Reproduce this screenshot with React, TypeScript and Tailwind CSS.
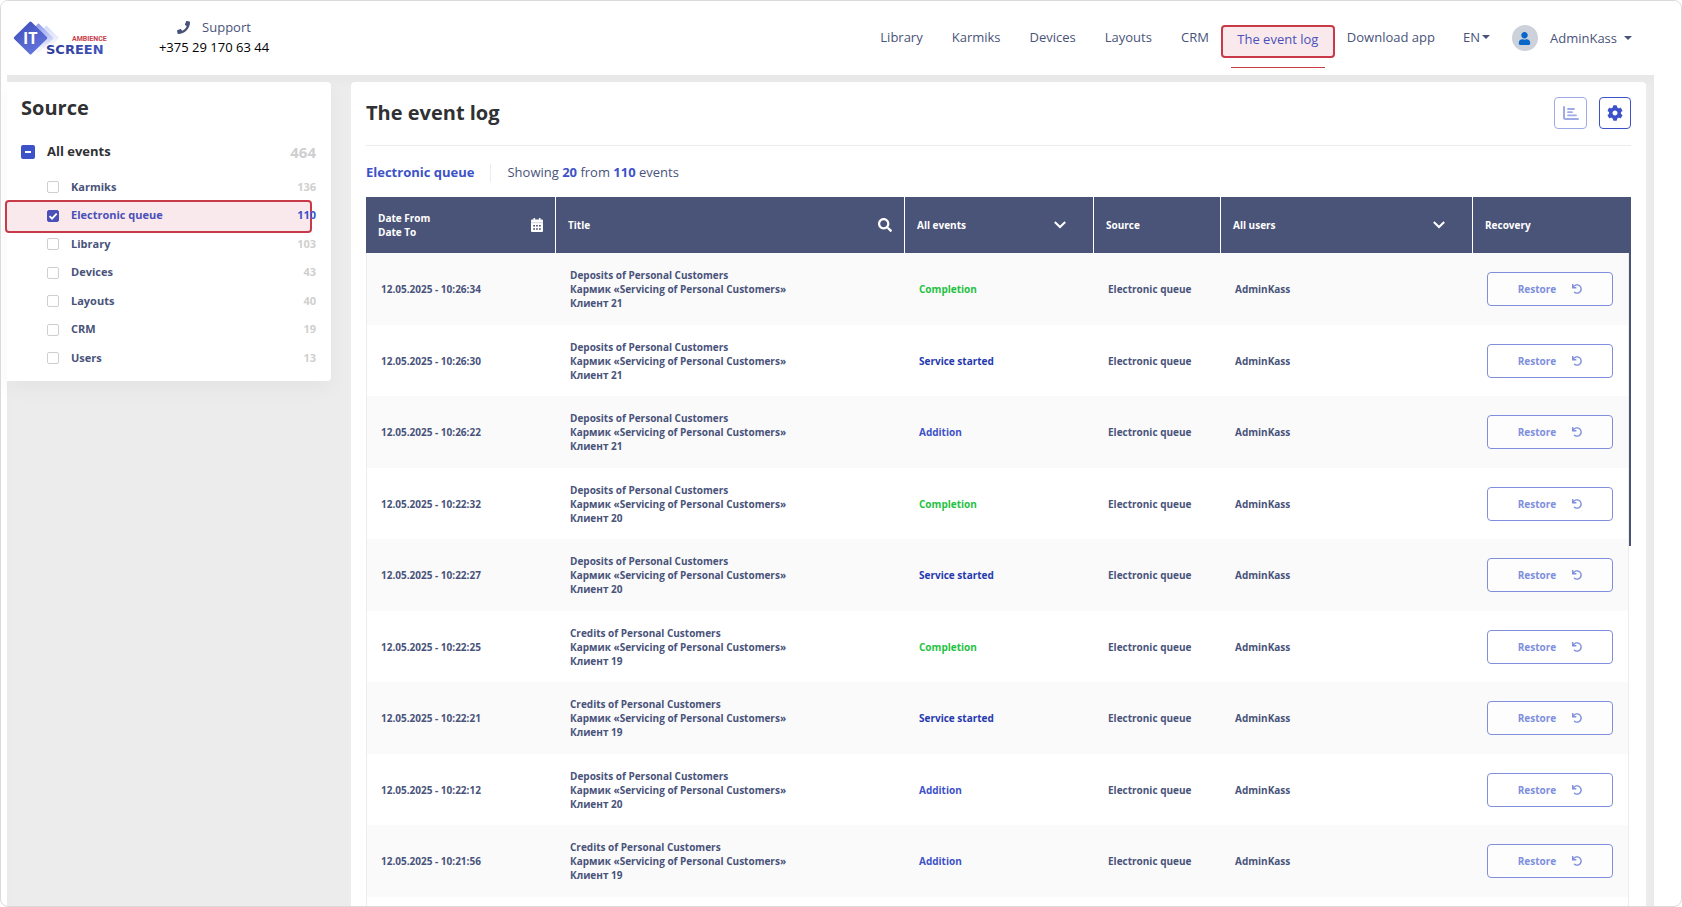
import { FaPhone, FaSearch, FaUser, FaCog, FaUndo } from "react-icons/fa";

type SourceItem = { name: string; count: number; checked?: boolean };
type LogRow = { date: string; kind: string; client: number; event: "Completion" | "Service started" | "Addition" };

const navBefore = ["Library", "Karmiks", "Devices", "Layouts", "CRM"];

const sources: SourceItem[] = [
  { name: "Karmiks", count: 136 },
  { name: "Electronic queue", count: 110, checked: true },
  { name: "Library", count: 103 },
  { name: "Devices", count: 43 },
  { name: "Layouts", count: 40 },
  { name: "CRM", count: 19 },
  { name: "Users", count: 13 },
];

const rows: LogRow[] = [
  { date: "12.05.2025 - 10:26:34", kind: "Deposits", client: 21, event: "Completion" },
  { date: "12.05.2025 - 10:26:30", kind: "Deposits", client: 21, event: "Service started" },
  { date: "12.05.2025 - 10:26:22", kind: "Deposits", client: 21, event: "Addition" },
  { date: "12.05.2025 - 10:22:32", kind: "Deposits", client: 20, event: "Completion" },
  { date: "12.05.2025 - 10:22:27", kind: "Deposits", client: 20, event: "Service started" },
  { date: "12.05.2025 - 10:22:25", kind: "Credits", client: 19, event: "Completion" },
  { date: "12.05.2025 - 10:22:21", kind: "Credits", client: 19, event: "Service started" },
  { date: "12.05.2025 - 10:22:12", kind: "Deposits", client: 20, event: "Addition" },
  { date: "12.05.2025 - 10:21:56", kind: "Credits", client: 19, event: "Addition" },
];

const eventColor = {
  Completion: "text-[#1fc243]",
  "Service started": "text-[#2439ae]",
  Addition: "text-[#3d52c8]",
};

function Logo() {
  return (
    <svg width="100" height="42" viewBox="0 0 100 42" role="img" aria-label="IT Screen Ambience">
      <defs>
        <linearGradient id="d1" x1="0" y1="0" x2="0.6" y2="1">
          <stop offset="0" stopColor="#3a4bb8" />
          <stop offset="1" stopColor="#6476dc" />
        </linearGradient>
        <linearGradient id="d2" x1="0" y1="0" x2="0" y2="1">
          <stop offset="0" stopColor="#8b99ea" />
          <stop offset="0.85" stopColor="#f4f5fe" />
        </linearGradient>
        <linearGradient id="d3" x1="0" y1="0" x2="0" y2="1">
          <stop offset="0" stopColor="#d3d9f9" />
          <stop offset="0.85" stopColor="#fbfbff" />
        </linearGradient>
        <linearGradient id="d4" x1="0" y1="0" x2="1" y2="0">
          <stop offset="0" stopColor="#2c3b98" />
          <stop offset="1" stopColor="#4254bd" />
        </linearGradient>
      </defs>
      <path d="M33.500 6.500l12.500 12.500-12.500 12.500L21 19z" fill="url(#d3)" />
      <path d="M25.500 4.200l15 15-15 15-15-15z" fill="url(#d2)" />
      <path d="M16.500 2.900q1-1 2 0l15.400 15.100q1 1 0 2L18.500 35.100q-1 1-2 0L1.200 20q-1-1 0-2z" fill="url(#d1)" />
      <text x="10" y="25" fill="#fff" fontFamily="Open Sans, sans-serif" fontWeight="700" fontSize="16">IT</text>
      <text x="59" y="22" fill="#c9404c" fontFamily="Roboto, sans-serif" fontWeight="700" fontSize="7">AMBIENCE</text>
      <text x="33" y="35" fill="url(#d4)" fontFamily="DejaVu Sans, sans-serif" fontWeight="700" fontSize="13">SCREEN</text>
    </svg>
  );
}

function Caret() {
  return (
    <svg width="8" height="4" viewBox="0 0 8 4" fill="currentColor" aria-hidden="true">
      <path d="M0 0h8L4 4z" />
    </svg>
  );
}

function Chevron() {
  return (
    <svg width="12" height="8" viewBox="0 0 12 8" fill="none" stroke="white" strokeWidth="2" aria-hidden="true">
      <path d="M0.800 1l5.200 5 5.200-5" />
    </svg>
  );
}

function CalendarIcon() {
  return (
    <svg width="12" height="14" viewBox="0 0 12 14" aria-hidden="true">
      <path d="M2.500 0h1.600v2H2.500zM7.900 0h1.600v2H7.900z" fill="#fff" />
      <rect x="0" y="1.600" width="12" height="12.400" rx="1" fill="#fff" />
      <path d="M0 4h12v1.200H0z" fill="#d9dbe6" />
      <path
        d="M2.200 7h1.800v1.600H2.200zM5.100 7h1.800v1.600H5.100zM8 7h1.800v1.600H8zM2.200 10.200h1.800v1.600H2.200zM5.100 10.200h1.800v1.600H5.100zM8 10.200h1.800v1.600H8z"
        fill="#4a5378"
      />
    </svg>
  );
}

function ChartIcon() {
  return (
    <svg width="16" height="14" viewBox="0 0 16 14" fill="none" stroke="currentColor" strokeWidth="2" strokeLinecap="round" aria-hidden="true">
      <path d="M1 1v10.500q0 1.500 1.500 1.500H15" />
      <path d="M5 3h6M5 6.200h4M5 9.400h8" strokeWidth="1.800" />
    </svg>
  );
}

function Header() {
  return (
    <header className="relative z-10 flex h-[74px] shrink-0 items-start justify-between bg-white pl-3 pr-[49px]">
      <div className="flex">
        <a href="#home" className="mt-[18px]">
          <Logo />
        </a>
        <div className="ml-8 mt-4 w-[138px] text-center text-[13px] leading-5">
          <a href="#support" className="flex items-center justify-center gap-3 text-[#49537a]">
            <FaPhone size={13} />
            Support
          </a>
          <p className="text-black">+375 29 170 63 44</p>
        </div>
      </div>
      <nav className="flex items-start text-[13px] leading-5 text-[#49537a]">
        <div className="mt-[26px] flex gap-[29px]">
          {navBefore.map((item) => (
            <a key={item} href="#nav">{item}</a>
          ))}
        </div>
        <div className="ml-3 mt-6 flex h-[43px] flex-col items-center justify-between">
          <a
            href="#log"
            className="flex h-[33px] w-[114px] items-center justify-center rounded border-2 border-[#c93a48] bg-[#f9e9ed] pb-[6px] text-[#4a50b8]"
          >
            The event log
          </a>
          <span className="h-px w-[94px] bg-[#c93a48]" />
        </div>
        <a href="#download" className="ml-3 mt-[26px]">Download app</a>
        <button className="ml-7 mt-[26px] flex items-center gap-[2px]">
          EN
          <Caret />
        </button>
        <button className="ml-[22px] mt-6 flex items-center">
          <span className="mr-3 flex size-[26px] items-center justify-center rounded-full bg-[#cdd1da] text-[#0a66c9]">
            <FaUser size={13} />
          </span>
          <span className="mr-[7px]">AdminKass</span>
          <Caret />
        </button>
      </nav>
    </header>
  );
}

function Sidebar() {
  return (
    <aside className="relative w-[324px] shrink-0 self-start rounded-r bg-white pb-[9px] pl-[14px] pr-[15px] pt-3 shadow-[0_8px_20px_rgba(0,0,0,0.04)]">
      <h2 className="text-xl font-bold leading-7 text-[#2f3133]">Source</h2>
      <div className="mt-4 flex h-7 items-center justify-between">
        <label className="flex items-center gap-3 text-[13px] font-bold text-[#2f3133]">
          <span className="relative flex size-[14px] items-center justify-center rounded-[2px] bg-[#3d52c8]">
            <input type="checkbox" className="absolute inset-0 m-0 size-full cursor-pointer opacity-0" />
            <span className="h-[2px] w-[6px] bg-white" />
          </span>
          All events
        </label>
        <span className="text-[15px] font-bold text-[#cfcfcf]">464</span>
      </div>
      <ul className="mt-[7px]">
        {sources.map((s) => (
          <li key={s.name} className="relative flex h-[29px] items-center justify-between text-[11px] font-bold odd:h-[28px]">
            {s.checked && (
              <span className="absolute -left-4 right-1 -top-[1px] h-[33px] rounded border-2 border-[#c93a48] bg-[#f9e9ed]" />
            )}
            <label className={`relative ml-[26px] flex items-center gap-3 ${s.checked ? "text-[#4a50b8]" : "text-[#49537a]"}`}>
              <span className="relative flex size-3">
                <input
                  type="checkbox"
                  defaultChecked={s.checked}
                  className="size-3 appearance-none rounded-[2px] border border-[#cfcfcf] bg-white checked:border-[#4a50b8] checked:bg-[#4a50b8]"
                />
                {s.checked && (
                  <svg className="pointer-events-none absolute inset-0" width="12" height="12" viewBox="0 0 12 12" fill="none" stroke="white" strokeWidth="1.800">
                    <path d="M2.500 6.200l2.500 2.400 4.700-5" />
                  </svg>
                )}
              </span>
              {s.name}
            </label>
            <span className={s.checked ? "relative text-[#3d52c8]" : "text-[#cfcfcf]"}>{s.count}</span>
          </li>
        ))}
      </ul>
    </aside>
  );
}

function LogTable() {
  return (
    <div className="relative">
      <table className="w-full table-fixed border-separate border-spacing-0 text-left text-[10px] font-bold leading-[14px] text-[#49537a]">
        <colgroup>
          <col className="w-[190px]" />
          <col />
          <col className="w-[189px]" />
          <col className="w-[127px]" />
          <col className="w-[252px]" />
          <col className="w-[158px]" />
        </colgroup>
        <thead>
          <tr className="h-14 bg-[#4a5378] text-white *:border-r *:border-white *:px-3 *:py-0 *:last:border-r-0">
            <th>
              <div className="flex items-center justify-between">
                <span>Date From<br />Date To</span>
                <CalendarIcon />
              </div>
            </th>
            <th>
              <div className="flex items-center justify-between">
                Title
                <FaSearch size={14} />
              </div>
            </th>
            <th>
              <button className="flex w-full items-center justify-between pr-[15px]">
                All events
                <Chevron />
              </button>
            </th>
            <th>Source</th>
            <th>
              <button className="flex w-full items-center justify-between pr-[15px]">
                All users
                <Chevron />
              </button>
            </th>
            <th>Recovery</th>
          </tr>
        </thead>
        <tbody>
          {rows.map((r) => (
            <tr key={r.date} className="h-[71px] odd:h-[72px] odd:bg-[#fafafa] *:px-[14px] *:py-0 *:first:border-l *:first:border-[#ececec]">
              <td>{r.date}</td>
              <td>
                {r.kind} of Personal Customers
                <br />
                Кармик «Servicing of Personal Customers»
                <br />
                Клиент {r.client}
              </td>
              <td className={eventColor[r.event]}>{r.event}</td>
              <td>Electronic queue</td>
              <td>AdminKass</td>
              <td>
                <button className="flex h-[34px] w-[126px] items-center justify-center gap-4 rounded border border-[#7f8fdd] bg-white/60 text-[#7f8fdd]">
                  Restore
                  <FaUndo size={10} />
                </button>
              </td>
            </tr>
          ))}
          <tr className="h-[72px]">
            <td className="border-l border-[#ececec]" colSpan={6} />
          </tr>
        </tbody>
      </table>
      <div className="absolute bottom-0 right-0 top-14 w-[3px] border-l border-[#ececec] bg-white">
        <div className="h-[293px] w-[2px] bg-[#4a5378]" />
      </div>
    </div>
  );
}

export default function App() {
  return (
    <div className="flex h-screen flex-col overflow-hidden rounded-lg border border-[#dadada] bg-white font-['Open_Sans',sans-serif]">
      <Header />
      <div className="ml-[6px] mr-[27px] flex min-h-0 flex-1 gap-5 bg-[#ececec] pr-2 pt-[7px] shadow-[inset_0_8px_8px_rgba(0,0,0,0.02)]">
        <Sidebar />
        <main className="min-w-0 flex-1 self-start rounded-t bg-white px-[15px] pt-[15px]">
          <div className="flex h-[49px] items-start justify-between border-b border-[#ececec]">
            <h1 className="text-xl font-bold leading-8 text-[#2f3133]">The event log</h1>
            <div className="flex gap-3">
              <button aria-label="Statistics" className="flex h-8 w-[33px] items-center justify-center rounded border border-[#9fabe6] text-[#9fabe6]">
                <ChartIcon />
              </button>
              <button aria-label="Settings" className="flex size-8 items-center justify-center rounded border border-[#3d52c8] text-[#3d52c8]">
                <FaCog size={16} />
              </button>
            </div>
          </div>
          <div className="flex h-[51px] items-center pt-[2px] text-[13px] text-[#49537a]">
            <strong className="text-[#3d52c8]">Electronic queue</strong>
            <span className="mx-4 h-[18px] w-px bg-[#ececec]" />
            <p>
              Showing <strong className="text-[#3d52c8]">20</strong> from <strong className="text-[#3d52c8]">110</strong> events
            </p>
          </div>
          <LogTable />
        </main>
      </div>
    </div>
  );
}
